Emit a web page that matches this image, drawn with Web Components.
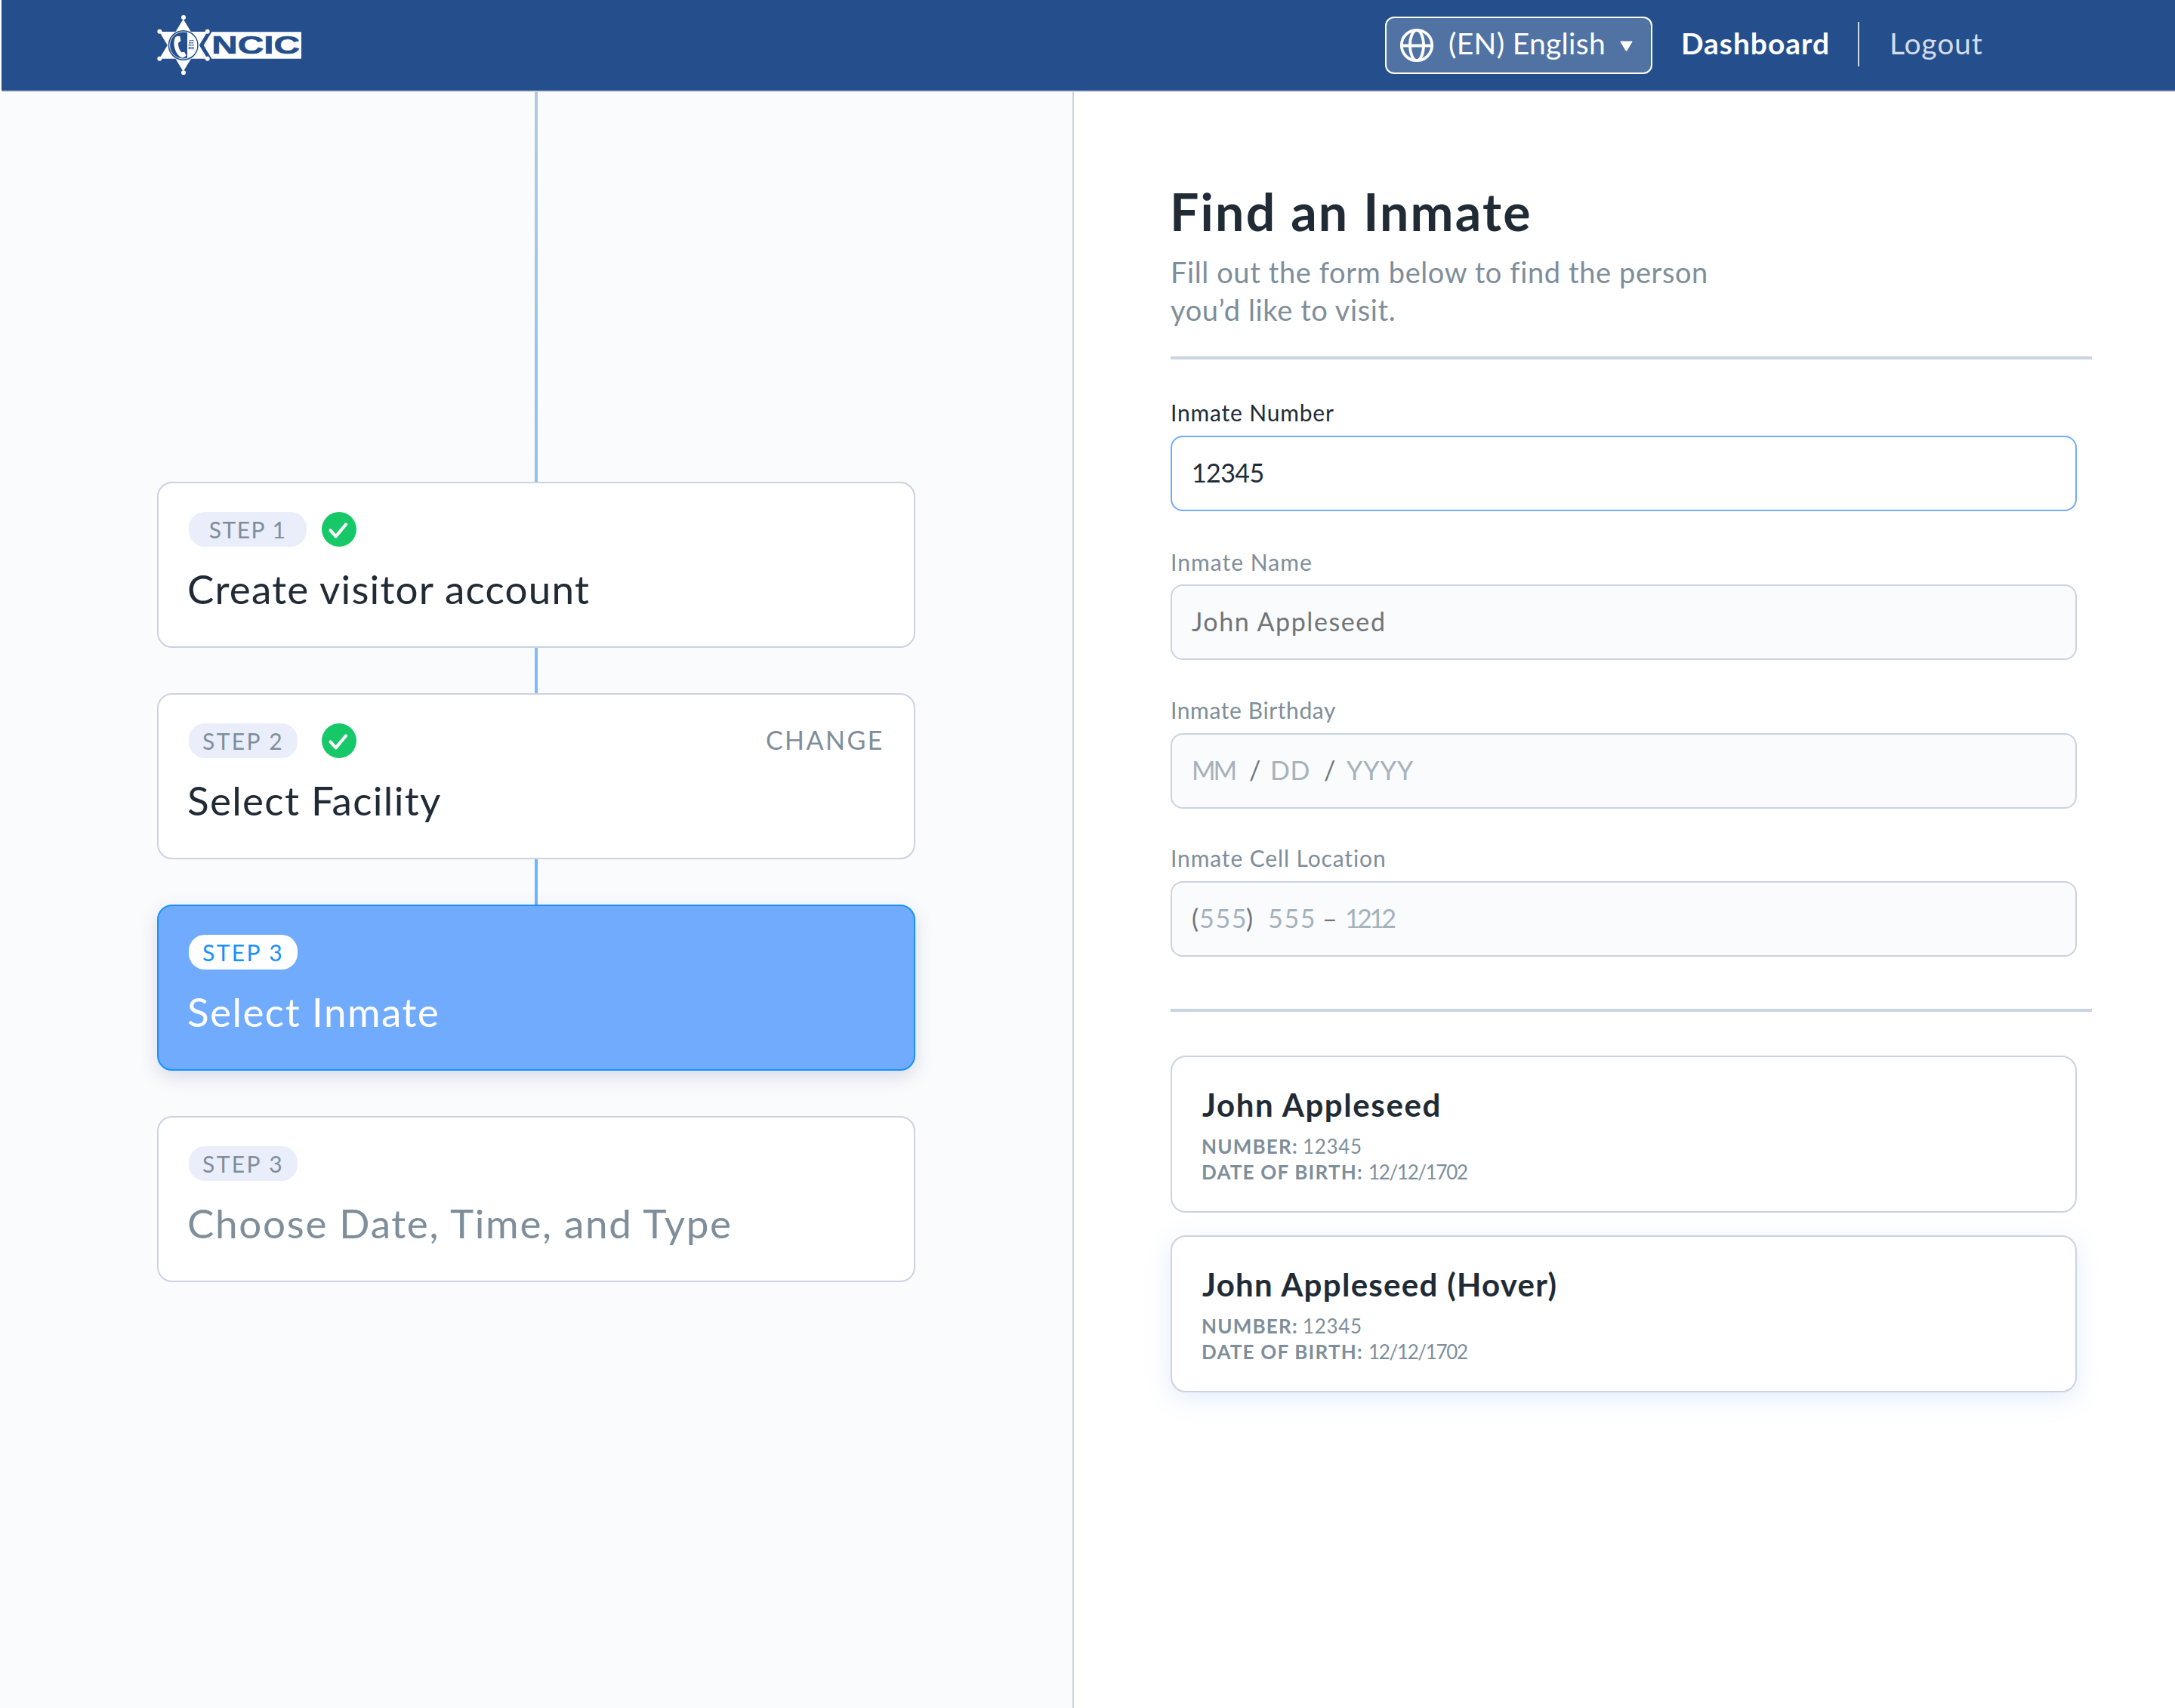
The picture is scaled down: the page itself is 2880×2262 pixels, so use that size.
<!DOCTYPE html>
<html lang="en">
<head>
<meta charset="utf-8">
<title>Find an Inmate</title>
<style>
  :root {
    --ink: #212b36;
    --muted: #7e8e9a;
    --line: #cbd2e1;
    --panel: #fafbfd;
  }
  body { margin: 0; width: 2880px; height: 2262px; overflow: hidden; background: #fff; font-family: Lato, "Liberation Sans", sans-serif; color: var(--ink); }
</style>
</head>
<body>
<script>
function define(name, html) {
  const t = document.createElement('template');
  t.innerHTML = html;
  customElements.define(name, class extends HTMLElement {
    constructor() {
      super();
      this.attachShadow({ mode: 'open' }).append(t.content.cloneNode(true));
    }
  });
}

define('ncic-logo', `
<style>:host{display:block}svg{display:block}</style>
<svg width="230" height="120" viewBox="0 0 690 360">
  <g fill="#fff">
    <path d="M158 76 L254 233 H63Z"/><path d="M158 284 L63 126 H254Z"/>
    <circle cx="159" cy="69" r="9"/><circle cx="159" cy="289" r="9"/>
    <circle cx="64" cy="125" r="9"/><circle cx="254" cy="125" r="9"/>
    <circle cx="64" cy="233" r="9"/><circle cx="254" cy="233" r="9"/>
    <path d="M271 127 H627 V233 H271 L239 180Z"/>
  </g>
  <circle cx="158" cy="180" r="60" fill="#244f8c"/>
  <circle cx="158" cy="180" r="54" fill="none" stroke="#fff" stroke-width="2.5"/>
  <path d="M174 128 A54 54 0 0 1 174 232Z" fill="#fff"/>
  <path d="M124 153 C127 145 137 141 145 145 L148 163 L138 170 C137 185 142 198 151 208 L162 206 L170 220 C164 230 152 232 145 226 C126 210 116 178 124 153Z" fill="#fff"/>
  <g stroke="#244f8c" stroke-width="4.5" fill="none">
    <path d="M182 161h17M180 170h19M179 179h21M179 188h21"/>
    <path d="M179 194h21" stroke-width="3"/>
  </g>
  <g stroke="#fff" stroke-width="1.5"><path d="M186 158v38M191 158v38M196 158v38"/></g>
  <text x="271" y="214" font-family="Liberation Sans, sans-serif" font-weight="700" font-size="99" fill="#244f8c" stroke="#244f8c" stroke-width="2" textLength="350" lengthAdjust="spacingAndGlyphs">NCIC</text>
</svg>`);

define('globe-icon', `
<style>:host{display:block}svg{display:block}</style>
<svg width="46" height="46" viewBox="0 0 46 46" fill="none" stroke="#fff" stroke-width="3.8">
  <circle cx="23" cy="23" r="20.200"/><ellipse cx="23" cy="23" rx="9" ry="20.200"/><path d="M2.800 23.500h40.400"/>
</svg>`);

define('language-picker', `
<style>
:host{box-sizing:border-box;display:flex;align-items:center;width:354px;height:76px;padding-left:17px;border:2px solid #fff;border-radius:12px;background:#5073a3;color:#fff;font-size:39px;line-height:46px;letter-spacing:.31px}
.name{width:208px;margin-left:19px;padding-bottom:6px;white-space:nowrap}
svg{display:block;margin:2px 0 0 19px}
</style>
<globe-icon></globe-icon><span class="name"><slot></slot></span>
<svg width="17" height="14" viewBox="0 0 17 14"><path d="M1.2.5h14.6q1.2 0 .6 1L9.5 13q-1 1.3-2 0L.6 1.500q-.6-1 .6-1z" fill="#fff"/></svg>`);

define('site-header', `
<style>
:host{box-sizing:border-box;display:flex;align-items:center;height:122px;margin-left:2px;padding-left:188px;border-bottom:2px solid #cdd2e2;background:#244f8c;color:#fff;font-size:39px;line-height:46px}
nav{display:flex;align-items:center;height:120px;margin-left:1414px}
.on{width:196px;margin-left:38px;padding-bottom:6px;font-weight:700;letter-spacing:.94px}
.sep{width:2px;height:59px;margin:0 0 3px 38px;background:#cfd8e5}
.off{margin-left:40px;padding-bottom:6px;color:#d3dce8;letter-spacing:.85px}
</style>
<ncic-logo></ncic-logo>
<nav><language-picker>(EN) English</language-picker>
<span class="on">Dashboard</span><span class="sep"></span><span class="off">Logout</span></nav>`);

define('check-icon', `
<style>:host{display:block}svg{display:block}</style>
<svg width="46" height="46" viewBox="0 0 46 46"><circle cx="23" cy="23" r="23" fill="#16c868"/><path d="M11.500 24.400l7.200 8L32 16.500" fill="none" stroke="#fff" stroke-width="4.2" stroke-linecap="round" stroke-linejoin="round"/></svg>`);

define('step-link', `
<style>:host{display:block;height:var(--h,60px);width:4px;margin:0 auto;background:linear-gradient(var(--from,transparent),var(--to,transparent))}</style>`);

define('step-card', `
<style>
:host{box-sizing:border-box;display:block;position:relative;height:220px;padding:38px 40px;border:2px solid var(--line);border-radius:20px;background:#fff}
:host([active]){background:#70abfe;border-color:#1890ff;color:#fff;box-shadow:0 8px 24px rgba(50,70,120,.18)}
:host([upcoming]){color:var(--muted)}
.top{display:flex;height:46px}
.cell{width:176px}
.badge{width:var(--badge,144px);height:46px;line-height:46px;border-radius:21px;background:#eaeefa;color:var(--muted);font-size:30px;letter-spacing:var(--badge-ls,2.4px);text-align:center}
:host([active]) .badge{background:#fff;color:#1890ff}
check-icon{display:none}
:host([done]) check-icon{display:block}
.action{margin:0 -1px 0 auto;font-size:34px;line-height:43px;letter-spacing:2.5px;color:var(--muted)}
.title{margin:25px 0 0 -2px;font-size:53px;line-height:62px;letter-spacing:var(--ls);white-space:nowrap}
</style>
<div class="top"><div class="cell"><div class="badge"><slot name="step"></slot></div></div><check-icon></check-icon><span class="action"><slot name="action"></slot></span></div>
<div class="title"><slot></slot></div>`);

define('step-list', `
<style>:host{box-sizing:border-box;display:block;width:1422px;height:2140px;padding:0 208px;border-right:2px solid var(--line);background:var(--panel)}</style><slot></slot>`);

define('rule-line', `<style>:host{display:block;width:1220px;height:4px;background:var(--line)}</style>`);

define('form-field', `
<style>
:host{display:block;width:1200px;margin-top:var(--before)}
.label{font-size:30px;line-height:36px;color:var(--muted);letter-spacing:var(--ls)}
.box{box-sizing:border-box;display:flex;align-items:center;height:100px;margin-top:var(--gap,13px);padding:0 26px 3px;border:2px solid var(--line);border-radius:16px;background:var(--panel);font-size:34px;line-height:42px;letter-spacing:var(--value-ls);color:#707577}
:host([focused]) .label{color:var(--ink)}
:host([focused]) .box{border-color:#70abfe;background:#fff;color:var(--ink)}
</style>
<div class="label"><slot name="label"></slot></div><div class="box"><slot></slot></div>`);

define('mask-part', `
<style>:host{display:block;width:var(--w);letter-spacing:var(--ls,0)}:host([hint]){color:#a5b1bb}</style><slot></slot>`);

define('inmate-card', `
<style>
:host{box-sizing:border-box;display:block;width:1200px;height:208px;padding:38px 40px;border:2px solid var(--line);border-radius:20px;background:#fff}
:host([hovered]){margin-top:30px;box-shadow:0 8px 32px rgba(90,140,240,.17)}
.name{font-size:42px;line-height:50px;font-weight:700;letter-spacing:var(--ls)}
dl{margin:13px 0 0 -1px;font-size:26px;line-height:34px;color:var(--muted)}
div.row{display:flex}
dt{font-weight:700;letter-spacing:1.2px}
dd{margin:0}
.n dt{width:134px}.n dd{letter-spacing:.67px}
.d dt{width:221px}.d dd{letter-spacing:-1.34px}
</style>
<div class="name"><slot></slot></div>
<dl><div class="row n"><dt>NUMBER:</dt><dd><slot name="number"></slot></dd></div>
<div class="row d"><dt>DATE OF BIRTH:</dt><dd><slot name="born"></slot></dd></div></dl>`);

define('inmate-search', `
<style>
:host{display:block;padding:118px 0 0 128px}
h1{margin:0 0 0 -1px;font-size:68px;line-height:80px;font-weight:700;letter-spacing:2.2px}
p{margin:15px 0 37px;font-size:38px;line-height:50px;letter-spacing:.6px;color:var(--muted)}
.last{margin:69px 0 58px}
</style>
<h1>Find an Inmate</h1>
<p>Fill out the form below to find the person<br>you’d like to visit.</p>
<rule-line></rule-line>
<slot name="field"></slot>
<rule-line class="last"></rule-line>
<slot></slot>`);

define('visit-page', `
<style>:host{display:block}main{display:flex}</style>
<site-header></site-header>
<main><slot></slot></main>`);
</script>

<visit-page>
  <step-list>
    <step-link style="--h:516px;--from:#b3c9e0;--to:#91bfef"></step-link>
    <step-card done style="--badge:156px;--badge-ls:1.500px;--ls:1.2px"><span slot="step">STEP 1</span>Create visitor account</step-card>
    <step-link style="--from:#83bbf5;--to:#7ebaf7"></step-link>
    <step-card done style="--ls:1.3px"><span slot="step">STEP 2</span><span slot="action">CHANGE</span>Select Facility</step-card>
    <step-link style="--from:#70b6fd;--to:#6cb5ff"></step-link>
    <step-card active style="--ls:1.45px"><span slot="step">STEP 3</span>Select Inmate</step-card>
    <step-link></step-link>
    <step-card upcoming style="--ls:1.68px"><span slot="step">STEP 3</span>Choose Date, Time, and Type</step-card>
  </step-list>
  <inmate-search>
    <form-field slot="field" focused style="--before:52px;--ls:.82px;--value-ls:-.6px"><span slot="label">Inmate Number</span>12345</form-field>
    <form-field slot="field" style="--before:49px;--gap:12px;--ls:1.05px;--value-ls:1.59px"><span slot="label">Inmate Name</span>John Appleseed</form-field>
    <form-field slot="field" style="--before:48px;--ls:.6px"><span slot="label">Inmate Birthday</span><mask-part hint style="--w:76px;--ls:-3px">MM</mask-part><mask-part style="--w:28px">/</mask-part><mask-part hint style="--w:71px">DD</mask-part><mask-part style="--w:30px">/</mask-part><mask-part hint style="--ls:1.1px">YYYY</mask-part></form-field>
    <form-field slot="field" style="--before:47px;--ls:.88px"><span slot="label">Inmate Cell Location</span><mask-part style="--w:10px">(</mask-part><mask-part hint style="--w:62px;--ls:1.7px">555</mask-part><mask-part style="--w:29px">)</mask-part><mask-part hint style="--w:72px;--ls:1.7px">555</mask-part><mask-part style="--w:30px">–</mask-part><mask-part hint style="--ls:-3.6px">1212</mask-part></form-field>
    <inmate-card style="--ls:1.6px">John Appleseed<span slot="number">12345</span><span slot="born">12/12/1702</span></inmate-card>
    <inmate-card hovered style="--ls:1.3px">John Appleseed (Hover)<span slot="number">12345</span><span slot="born">12/12/1702</span></inmate-card>
  </inmate-search>
</visit-page>
</body>
</html>
